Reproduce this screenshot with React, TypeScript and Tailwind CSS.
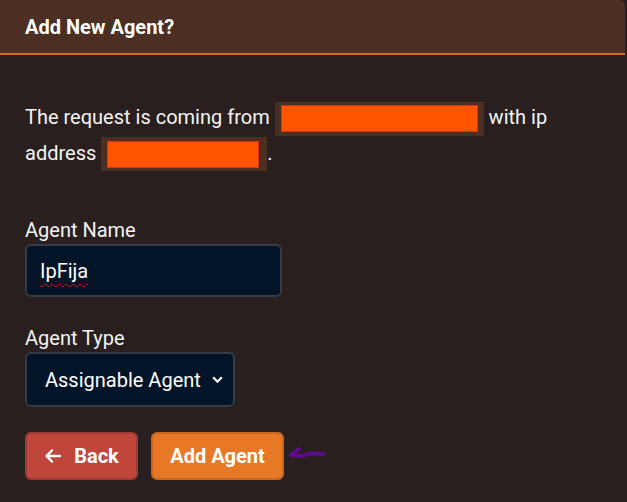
import { FC } from "react"

const Redacted: FC<{ boxW: number; fillW: number }> = ({ boxW, fillW }) => (
  <span
    className="inline-flex items-center bg-[#4a2f22] h-[34px] px-[6px] align-middle"
    style={{ width: boxW }}
  >
    <span className="h-[27px] bg-[#ff5500] border border-[#e0301c]" style={{ width: fillW }} />
  </span>
)

const App: FC = () => {
  return (
    <div className="w-[627px] h-[502px] bg-[#2a201f] overflow-hidden font-['Roboto',sans-serif] text-white">
      <div className="w-[625px] h-full flex flex-col bg-[#291f1e] rounded-tr-md">
        <div className="h-[53px] bg-[#4a2f22] rounded-tr-md flex items-center px-[25px] shrink-0">
          <h2 className="text-[20px] font-bold">Add New Agent?</h2>
        </div>
        <div className="h-[2px] bg-[#d8691e] shrink-0" />

        <div className="px-[25px] pt-[45px] flex flex-col">
          <p className="text-[20px] leading-[35px] text-[#f4f4f4]">
            The request is coming from <Redacted boxW={209} fillW={197} /> with ip
            <br />
            address <Redacted boxW={166} fillW={152} />.
          </p>

          <label className="mt-[46px] text-[20px] leading-[26px] text-[#f4f4f4]">Agent Name</label>
          <div className="mt-[1px] w-[257px] h-[53px] bg-[#011428] border-2 border-[#353c45] rounded-md flex items-center px-[13px]">
            <span className="text-[20px] underline decoration-wavy decoration-[#e01010] decoration-1 underline-offset-[5px]">
              IpFija
            </span>
          </div>

          <label className="mt-[28px] text-[20px] leading-[26px] text-[#f4f4f4]">Agent Type</label>
          <div className="mt-[1px] w-[210px] h-[55px] bg-[#011428] border-2 border-[#353c45] rounded-md flex items-center justify-between pl-[18px] pr-[9px]">
            <span className="text-[20px]">Assignable Agent</span>
            <svg width="13" height="13" viewBox="0 0 12 12" fill="none" stroke="white" strokeWidth="2">
              <path d="M2 4l4 4 4-4" />
            </svg>
          </div>

          <div className="mt-[25px] flex items-center gap-[13px]">
            <button className="w-[113px] h-[48px] bg-[#c0463b] border-2 border-[#9e3a31] rounded-md flex items-center justify-center gap-[12px] text-[20px] font-bold">
              <svg width="18" height="16" viewBox="0 0 18 16" fill="none" stroke="white" strokeWidth="2.4" strokeLinecap="round" strokeLinejoin="round">
                <path d="M16 8H3M8 2.5L2.5 8 8 13.5" />
              </svg>
              Back
            </button>
            <button className="w-[133px] h-[48px] bg-[#e67826] border-2 border-[#c8641c] rounded-md flex items-center justify-center text-[20px] font-bold">
              Add Agent
            </button>
            <svg width="40" height="20" viewBox="0 0 40 20" fill="none" stroke="#5e0a8c" strokeWidth="4" strokeLinecap="round" strokeLinejoin="round" className="-ml-[9px]">
              <path d="M11 3C8 5 6 7 3 9c5 1 10 1 14 0s10-2 18-1" />
            </svg>
          </div>
        </div>
      </div>
    </div>
  )
}
export default App
